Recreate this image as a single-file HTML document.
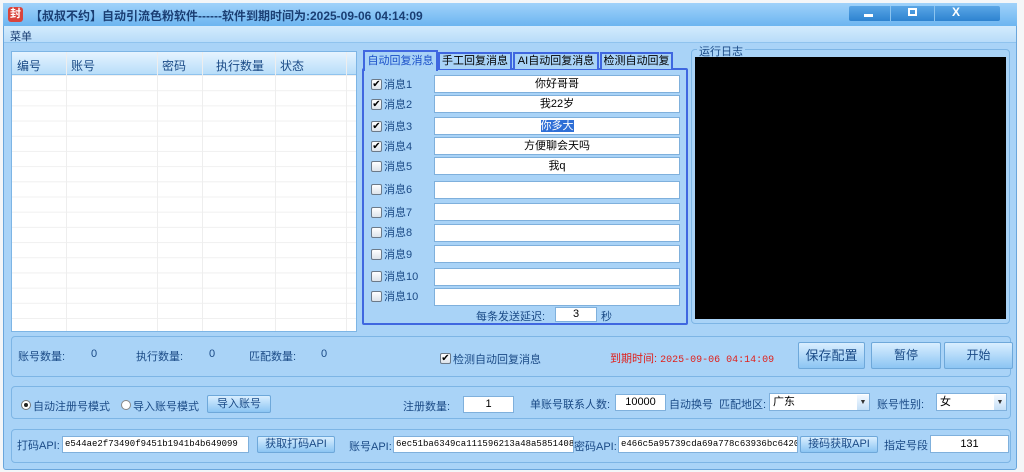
<!DOCTYPE html>
<html><head><meta charset="utf-8"><style>
*{box-sizing:border-box;margin:0;padding:0}
body{width:1024px;height:472px;background:#f4f6f8;position:relative;overflow:hidden;font-family:"Liberation Sans","Noto Sans CJK SC",sans-serif;font-size:11px;color:#1a4a86}
.a{position:absolute}
.win{left:3px;top:3px;width:1014px;height:467px;background:#a9d3f7;border:1px solid #6aa6dc;border-radius:3px}
.title{left:3px;top:3px;width:1014px;height:23px;background:linear-gradient(#a0d2fa,#6cb5f0);}
.menu{left:4px;top:26px;width:1012px;height:17px;background:linear-gradient(#d3ebfd,#b8dcf9);border-bottom:1px solid #8fc3ee}
.panel{border:1px solid #7db5e5;border-radius:4px;background:#a9d3f7}
.inp{background:#fff;border:1px solid #7fb0dc;color:#000;text-align:center;font-size:11px;line-height:16px;height:18px;white-space:nowrap;overflow:hidden}
.cb{width:11px;height:11px;border:1px solid #6c7a89;background:linear-gradient(#fff,#dde3ea);border-radius:2px;font-size:10px;line-height:9px;text-align:center;color:#000}
.btn{background:linear-gradient(#d9eeff,#8cc5f3);border:1px solid #6ea8da;border-radius:2px;text-align:center;color:#1a4a86}
.mono{font-family:"Liberation Mono",monospace;font-size:9px;text-align:left;padding-left:2px}
</style></head><body>
<div class="a win"></div>
<div class="a title"></div>
<div class="a" style="left:8px;top:7px;width:15px;height:15px;background:#d9443c;border-radius:3px;color:#fff;font-size:11px;line-height:15px;text-align:center;font-weight:bold">封</div>
<div class="a" style="left:30px;top:7px;font-size:12px;font-weight:bold;color:#1a3e73">【叔叔不约】自动引流色粉软件------软件到期时间为:2025-09-06 04:14:09</div>
<div class="a" style="left:849px;top:6px;width:151px;height:15px;background:linear-gradient(#5aa6e6,#2d83d0);border-radius:2px"></div>
<div class="a" style="left:890px;top:6px;width:1px;height:15px;background:#8cc4ef"></div>
<div class="a" style="left:934px;top:6px;width:1px;height:15px;background:#8cc4ef"></div>
<div class="a" style="left:864px;top:14px;width:9px;height:3px;background:#fff"></div>
<div class="a" style="left:908px;top:8px;width:9px;height:8px;border:2px solid #fff"></div>
<div class="a" style="left:952px;top:5px;color:#fff;font-weight:bold;font-size:12px">X</div>
<div class="a menu"></div>
<div class="a" style="left:10px;top:28px;color:#1a3e73">菜单</div>

<!-- table -->
<div class="a" style="left:11px;top:51px;width:346px;height:281px;background:#fff;border:1px solid #7db5e5;
background-image:linear-gradient(#f0f0f0 1px,transparent 1px);background-size:100% 15.2px;background-position:0 23px"></div>
<div class="a" style="left:12px;top:52px;width:344px;height:23px;background:linear-gradient(#e6f4ff,#b8def9);border-bottom:1px solid #8fc3ee"></div>
<div class="a" style="left:66px;top:52px;width:1px;height:279px;background:#eee"></div>
<div class="a" style="left:157px;top:52px;width:1px;height:279px;background:#eee"></div>
<div class="a" style="left:202px;top:52px;width:1px;height:279px;background:#eee"></div>
<div class="a" style="left:275px;top:52px;width:1px;height:279px;background:#eee"></div>
<div class="a" style="left:346px;top:52px;width:1px;height:279px;background:#eee"></div>
<div class="a" style="left:17px;top:57px;font-size:12px">编号</div>
<div class="a" style="left:71px;top:57px;font-size:12px">账号</div>
<div class="a" style="left:162px;top:57px;font-size:12px">密码</div>
<div class="a" style="left:216px;top:57px;font-size:12px">执行数量</div>
<div class="a" style="left:280px;top:57px;font-size:12px">状态</div>

<!-- tabs -->
<div class="a" style="left:362px;top:68px;width:326px;height:257px;border:2px solid #3f67e0;border-radius:2px;background:#a9d3f7"></div>
<div class="a" style="left:438px;top:52px;width:74px;height:17px;border:2px solid #3f67e0;border-bottom:none;background:#a9d3f7;color:#000;font-size:11px;text-align:center;line-height:14px">手工回复消息</div>
<div class="a" style="left:513px;top:52px;width:86px;height:17px;border:2px solid #3f67e0;border-bottom:none;background:#a9d3f7;color:#000;font-size:11px;text-align:center;line-height:14px">AI自动回复消息</div>
<div class="a" style="left:600px;top:52px;width:73px;height:17px;border:2px solid #3f67e0;border-bottom:none;background:#a9d3f7;color:#000;font-size:11px;text-align:center;line-height:14px">检测自动回复</div>
<div class="a" style="left:363px;top:50px;width:75px;height:21px;border:2px solid #3f67e0;border-bottom:none;background:#a9d3f7;color:#1a4fc8;font-size:11px;text-align:center;line-height:18px">自动回复消息</div>

<div class="a cb" style="left:371px;top:79px">✔</div><div class="a" style="left:384px;top:76px">消息1</div><div class="a inp" style="left:434px;top:75px;width:246px">你好哥哥</div>
<div class="a cb" style="left:371px;top:99px">✔</div><div class="a" style="left:384px;top:96px">消息2</div><div class="a inp" style="left:434px;top:95px;width:246px">我22岁</div>
<div class="a cb" style="left:371px;top:121px">✔</div><div class="a" style="left:384px;top:118px">消息3</div><div class="a inp" style="left:434px;top:117px;width:246px"><span style="background:#2f6fd6;color:#fff">你多大</span></div>
<div class="a cb" style="left:371px;top:141px">✔</div><div class="a" style="left:384px;top:138px">消息4</div><div class="a inp" style="left:434px;top:137px;width:246px">方便聊会天吗</div>
<div class="a cb" style="left:371px;top:161px"></div><div class="a" style="left:384px;top:158px">消息5</div><div class="a inp" style="left:434px;top:157px;width:246px">我q</div>
<div class="a cb" style="left:371px;top:184px"></div><div class="a" style="left:384px;top:181px">消息6</div><div class="a inp" style="left:434px;top:181px;width:246px"></div>
<div class="a cb" style="left:371px;top:207px"></div><div class="a" style="left:384px;top:204px">消息7</div><div class="a inp" style="left:434px;top:203px;width:246px"></div>
<div class="a cb" style="left:371px;top:227px"></div><div class="a" style="left:384px;top:224px">消息8</div><div class="a inp" style="left:434px;top:224px;width:246px"></div>
<div class="a cb" style="left:371px;top:249px"></div><div class="a" style="left:384px;top:246px">消息9</div><div class="a inp" style="left:434px;top:245px;width:246px"></div>
<div class="a cb" style="left:371px;top:271px"></div><div class="a" style="left:384px;top:268px">消息10</div><div class="a inp" style="left:434px;top:268px;width:246px"></div>
<div class="a cb" style="left:371px;top:291px"></div><div class="a" style="left:384px;top:288px">消息10</div><div class="a inp" style="left:434px;top:288px;width:246px"></div>
<div class="a" style="left:476px;top:308px">每条发送延迟:</div>
<div class="a inp" style="left:555px;top:307px;width:42px;height:15px;line-height:13px">3</div>
<div class="a" style="left:601px;top:308px">秒</div>

<!-- log -->
<div class="a" style="left:691px;top:49px;width:319px;height:275px;border:1px solid #7db5e5;border-radius:4px"></div>
<div class="a" style="left:697px;top:43px;background:#a9d3f7;padding:0 2px;font-size:11px">运行日志</div>
<div class="a" style="left:695px;top:57px;width:311px;height:262px;background:#000"></div>

<!-- stats -->
<div class="a panel" style="left:11px;top:336px;width:1000px;height:41px"></div>
<div class="a" style="left:18px;top:348px">账号数量:</div><div class="a" style="left:91px;top:348px">0</div>
<div class="a" style="left:136px;top:348px">执行数量:</div><div class="a" style="left:209px;top:348px">0</div>
<div class="a" style="left:249px;top:348px">匹配数量:</div><div class="a" style="left:321px;top:348px">0</div>
<div class="a cb" style="left:440px;top:353px">✔</div><div class="a" style="left:453px;top:351px">检测自动回复消息</div>
<div class="a" style="left:610px;top:350px;color:#e0201c">到期时间: <span style="font-family:'Liberation Mono',monospace;font-size:10px">2025-09-06 04:14:09</span></div>
<div class="a btn" style="left:798px;top:342px;width:67px;height:27px;line-height:25px;font-size:13px">保存配置</div>
<div class="a btn" style="left:871px;top:342px;width:70px;height:27px;line-height:25px;font-size:12px">暂停</div>
<div class="a btn" style="left:944px;top:342px;width:69px;height:27px;line-height:25px;font-size:12px">开始</div>

<!-- mode -->
<div class="a panel" style="left:11px;top:386px;width:1000px;height:33px"></div>
<div class="a" style="left:21px;top:400px;width:10px;height:10px;border-radius:50%;border:1px solid #777;background:#fff"></div>
<div class="a" style="left:24px;top:403px;width:4px;height:4px;border-radius:50%;background:#222"></div>
<div class="a" style="left:33px;top:398px">自动注册号模式</div>
<div class="a" style="left:121px;top:400px;width:10px;height:10px;border-radius:50%;border:1px solid #888;background:#fff"></div>
<div class="a" style="left:133px;top:398px">导入账号模式</div>
<div class="a btn" style="left:207px;top:395px;width:64px;height:18px;line-height:16px">导入账号</div>
<div class="a" style="left:403px;top:398px">注册数量:</div>
<div class="a inp" style="left:463px;top:396px;width:51px;height:17px;line-height:15px">1</div>
<div class="a" style="left:530px;top:396px">单账号联系人数:</div>
<div class="a inp" style="left:615px;top:394px;width:51px;height:17px;line-height:15px">10000</div>
<div class="a" style="left:669px;top:396px">自动换号</div>
<div class="a" style="left:719px;top:396px">匹配地区:</div>
<div class="a inp" style="left:769px;top:393px;width:101px;height:18px;text-align:left;padding-left:3px">广东</div>
<div class="a" style="left:857px;top:395px;width:12px;height:15px;background:linear-gradient(#f4f9ff,#c4dff7);font-size:7px;text-align:center;line-height:15px;color:#333">▼</div>
<div class="a" style="left:877px;top:396px">账号性别:</div>
<div class="a inp" style="left:936px;top:393px;width:71px;height:18px;text-align:left;padding-left:3px">女</div>
<div class="a" style="left:994px;top:395px;width:12px;height:15px;background:linear-gradient(#f4f9ff,#c4dff7);font-size:7px;text-align:center;line-height:15px;color:#333">▼</div>

<!-- api -->
<div class="a panel" style="left:11px;top:429px;width:1000px;height:34px"></div>
<div class="a" style="left:17px;top:437px">打码API:</div>
<div class="a inp mono" style="left:62px;top:436px;width:187px;height:17px;line-height:15px">e544ae2f73490f9451b1941b4b649099</div>
<div class="a btn" style="left:257px;top:436px;width:78px;height:17px;line-height:15px">获取打码API</div>
<div class="a" style="left:349px;top:438px">账号API:</div>
<div class="a inp mono" style="left:393px;top:436px;width:181px;height:17px;line-height:15px">6ec51ba6349ca111596213a48a5851408</div>
<div class="a" style="left:574px;top:438px">密码API:</div>
<div class="a inp mono" style="left:618px;top:436px;width:180px;height:17px;line-height:15px">e466c5a95739cda69a778c63936bc6420</div>
<div class="a btn" style="left:800px;top:436px;width:78px;height:17px;line-height:15px">接码获取API</div>
<div class="a" style="left:884px;top:437px">指定号段</div>
<div class="a inp" style="left:930px;top:435px;width:79px;height:18px">131</div>
</body></html>
